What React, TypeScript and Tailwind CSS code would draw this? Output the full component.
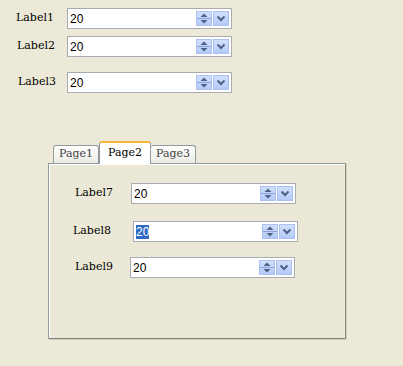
import React from "react";

const SpinIcon = () => (
  <svg width="16" height="15" viewBox="0 0 16 15" className="block">
    <defs>
      <linearGradient id="sg" x1="0" y1="0" x2="0" y2="1">
        <stop offset="0" stopColor="#D2E0FD" />
        <stop offset="1" stopColor="#B4C9F7" />
      </linearGradient>
    </defs>
    <rect x="0.5" y="0.5" width="15" height="14" fill="url(#sg)" stroke="#A9C0F0" />
    <line x1="1" y1="7.5" x2="15" y2="7.5" stroke="#8AA4DB" />
    <path d="M4.5 6 L8 2.5 L11.5 6 Z" fill="#4D6185" />
    <path d="M4.5 9 L8 12.5 L11.5 9 Z" fill="#4D6185" />
  </svg>
);

const DropIcon = () => (
  <svg width="16" height="15" viewBox="0 0 16 15" className="block">
    <defs>
      <linearGradient id="dg" x1="0" y1="0" x2="0" y2="1">
        <stop offset="0" stopColor="#D2E0FD" />
        <stop offset="1" stopColor="#B4C9F7" />
      </linearGradient>
    </defs>
    <rect x="0.5" y="0.5" width="15" height="14" fill="url(#dg)" stroke="#A9C0F0" />
    <path d="M4.5 5.5 L8 9 L11.5 5.5" stroke="#4D6185" strokeWidth="2" fill="none" />
  </svg>
);

const Input = ({ selected }: { selected?: boolean }) => (
  <div className="flex items-center w-[165px] h-[21px] border border-[#a9adb3] bg-white">
    <div
      className="flex-1 pl-[2px] text-[12px] leading-[14px] text-black"
      style={{ fontFamily: '"Liberation Sans", Arial, sans-serif' }}
    >
      {selected ? <span className="bg-[#316AC5] text-white">20</span> : "20"}
    </div>
    <SpinIcon />
    <div className="w-px" />
    <DropIcon />
    <div className="w-[2px]" />
  </div>
);

const labelFont = { fontFamily: '"DejaVu Serif", "Liberation Serif", serif' };

export default function App() {
  return (
    <div className="w-[403px] h-[366px] bg-[#ECE9D8] overflow-hidden pt-[8px]">
      {/* Row 1 */}
      <div className="flex items-center h-[21px]">
        <div className="w-[67px] pl-[16px] text-[11px] font-medium text-black" style={labelFont}>
          Label1
        </div>
        <Input />
      </div>
      {/* Row 2 */}
      <div className="flex items-center h-[21px] mt-[7px]">
        <div className="w-[67px] pl-[17px] text-[11px] font-medium text-black" style={labelFont}>
          Label2
        </div>
        <Input />
      </div>
      {/* Row 3 */}
      <div className="flex items-center h-[21px] mt-[15px]">
        <div className="w-[67px] pl-[18px] text-[11px] font-medium text-black" style={labelFont}>
          Label3
        </div>
        <Input />
      </div>

      {/* Tab control */}
      <div className="ml-[48px] mt-[48px] w-[298px]">
        <div className="relative z-10 flex items-end h-[22px] pl-[5px]" style={labelFont}>
          <div className="w-[46px] h-[18px] border border-b-0 border-[#919B9C] rounded-t-[3px] bg-gradient-to-b from-white to-[#ECEBE6] flex items-center justify-center text-[11px] text-[#444]">
            Page1
          </div>
          <div className="w-[52px] h-[23px] -mb-px border border-b-0 border-[#919B9C] border-t-2 border-t-[#F5B63A] rounded-t-[3px] bg-white flex items-center justify-center text-[11px] text-black">
            Page2
          </div>
          <div className="w-[45px] h-[18px] border border-b-0 border-l-0 border-[#919B9C] rounded-t-[3px] bg-gradient-to-b from-white to-[#ECEBE6] flex items-center justify-center text-[11px] text-[#444]">
            Page3
          </div>
        </div>
        <div className="h-[176px] border border-[#919B9C] border-r-[#8a8a80] border-b-[#7f7f78] bg-[#EBE8D7] shadow-[inset_1px_1px_0_#ffffff,1px_1px_0_#d3d0c2] pt-[19px]">
          {/* Row 7 */}
          <div className="flex items-center h-[21px]">
            <div className="w-[82px] pl-[26px] text-[11px] font-medium text-black" style={labelFont}>
              Label7
            </div>
            <Input />
          </div>
          {/* Row 8 */}
          <div className="flex items-center h-[21px] mt-[17px]">
            <div className="w-[84px] pl-[24px] text-[11px] font-medium text-black" style={labelFont}>
              Label8
            </div>
            <Input selected />
          </div>
          {/* Row 9 */}
          <div className="flex items-center h-[21px] mt-[15px]">
            <div className="w-[81px] pl-[26px] text-[11px] font-medium text-black" style={labelFont}>
              Label9
            </div>
            <Input />
          </div>
        </div>
      </div>
    </div>
  );
}
